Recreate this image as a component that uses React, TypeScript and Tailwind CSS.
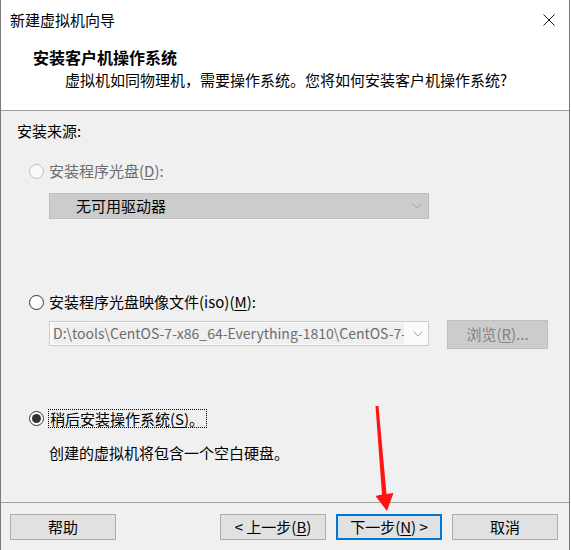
import React from 'react'

const FONT = { fontFamily: '"Noto Sans CJK SC", "Microsoft YaHei", sans-serif' }

function Chevron({ color = '#a6a6a6' }: { color?: string }) {
  return (
    <svg width="10" height="6" viewBox="0 0 10 6" className="shrink-0">
      <path d="M0.5 0.5 L5 5 L9.5 0.5" fill="none" stroke={color} strokeWidth="1" />
    </svg>
  )
}

function Radio({ state }: { state: 'disabled' | 'off' | 'on' }) {
  const ring =
    state === 'disabled' ? 'border-[#bcbcbc] bg-[#fafafa]' : 'border-[#333333] bg-white'
  return (
    <span className={`w-[15px] h-[15px] rounded-full border flex items-center justify-center shrink-0 ${ring}`}>
      {state === 'on' && <span className="w-[9px] h-[9px] rounded-full bg-[#333333]" />}
    </span>
  )
}

function Key({ k }: { k: string }) {
  return <span className="underline underline-offset-2">{k}</span>
}

function Btn({ children, primary }: { children: React.ReactNode; primary?: boolean }) {
  return (
    <button
      className={`w-[106px] h-[26px] bg-[#e1e1e1] text-[15px] text-black flex items-center justify-center ${
        primary ? 'border-2 border-[#0078d7]' : 'border border-[#adadad]'
      }`}
    >
      {children}
    </button>
  )
}

export default function App() {
  return (
    <div className="w-[571px] h-[550px] bg-white relative overflow-hidden" style={FONT}>
      <div className="w-[570px] h-[550px] border-l border-r border-[#7a7a7a] flex flex-col">
        {/* Header */}
        <div className="bg-white h-[111px] border-b border-[#a0a0a0] shrink-0">
          <div className="h-[40px] flex items-center justify-between pl-[9px] pr-[14px]">
            <span className="text-[15px] text-black leading-[20px]">新建虚拟机向导</span>
            <svg width="12" height="12" viewBox="0 0 12 12">
              <path d="M0.5 0.5 L11.5 11.5 M11.5 0.5 L0.5 11.5" stroke="#1a1a1a" strokeWidth="1" />
            </svg>
          </div>
          <div className="mt-[7px] pl-[32px] h-[20px] leading-[20px] text-[16px] font-bold text-black">
            安装客户机操作系统
          </div>
          <div className="mt-[3px] pl-[64px] h-[20px] leading-[20px] text-[15px] text-black">
            虚拟机如同物理机，需要操作系统。您将如何安装客户机操作系统?
          </div>
        </div>

        {/* Body */}
        <div className="bg-[#f0f0f0] h-[391px] shrink-0 flex flex-col text-[15px] text-black">
          <div className="mt-[10px] ml-[16px] h-[20px] leading-[20px]">安装来源:</div>

          <div className="mt-[20px] ml-[28px] h-[20px] flex items-center gap-[5px]">
            <Radio state="disabled" />
            <span className="text-[#6d6d6d] leading-[20px]">
              安装程序光盘(<Key k="D" />):
            </span>
          </div>

          <div className="mt-[12px] ml-[48px] w-[380px] h-[26px] bg-[#cccccc] border border-[#bfbfbf] flex items-center justify-between pl-[26px] pr-[6px]">
            <span className="leading-[20px]">无可用驱动器</span>
            <Chevron color="#a8a8a8" />
          </div>

          <div className="mt-[73px] ml-[28px] h-[20px] flex items-center gap-[5px]">
            <Radio state="off" />
            <span className="leading-[20px]">
              安装程序光盘映像文件(iso)(<Key k="M" />):
            </span>
          </div>

          <div className="mt-[8px] ml-[48px] flex items-start gap-[18px]">
            <div className="mt-[1px] w-[380px] h-[25px] bg-[#fbfbfb] border border-[#cccccc] flex items-center justify-between pl-[3px] pr-[5px]">
              <span className="w-[351px] h-[21px] bg-[#f0f0f0] text-[#6d6d6d] text-[14px] leading-[21px] whitespace-nowrap overflow-hidden">
                D:\tools\CentOS-7-x86_64-Everything-1810\CentOS-7-x86_64-Everything-1810.iso
              </span>
              <Chevron color="#a6a6a6" />
            </div>
            <div className="w-[101px] h-[29px] bg-[#cccccc] border border-[#bfbfbf] flex items-center justify-center text-[#838383]">
              浏览(<Key k="R" />)...
            </div>
          </div>

          <div className="mt-[60px] ml-[28px] h-[19px] flex items-center gap-[4px]">
            <Radio state="on" />
            <span className="h-[19px] border border-dotted border-black leading-[17px] pl-[1px] pr-[2px]">
              稍后安装操作系统(<Key k="S" />)。
            </span>
          </div>

          <div className="mt-[15px] ml-[48px] h-[20px] leading-[20px]">创建的虚拟机将包含一个空白硬盘。</div>
        </div>

        {/* Footer */}
        <div className="bg-[#f0f0f0] flex-1 border-t border-[#a0a0a0] pt-[11px] pl-[9px] flex items-start">
          <Btn>帮助</Btn>
          <div className="ml-[104px] flex gap-[10px]">
            <Btn>
              &lt; 上一步(<Key k="B" />)
            </Btn>
            <Btn primary>
              下一步(<Key k="N" />) &gt;
            </Btn>
            <Btn>取消</Btn>
          </div>
        </div>
      </div>

      {/* Red annotation arrow */}
      <svg className="absolute left-0 top-0 pointer-events-none" width="571" height="550">
        <polygon
          points="375.5,406 378.5,406 386.5,494 393.5,493 387,511 375.5,496 382,494.5"
          fill="#ff1414"
        />
      </svg>
    </div>
  )
}
